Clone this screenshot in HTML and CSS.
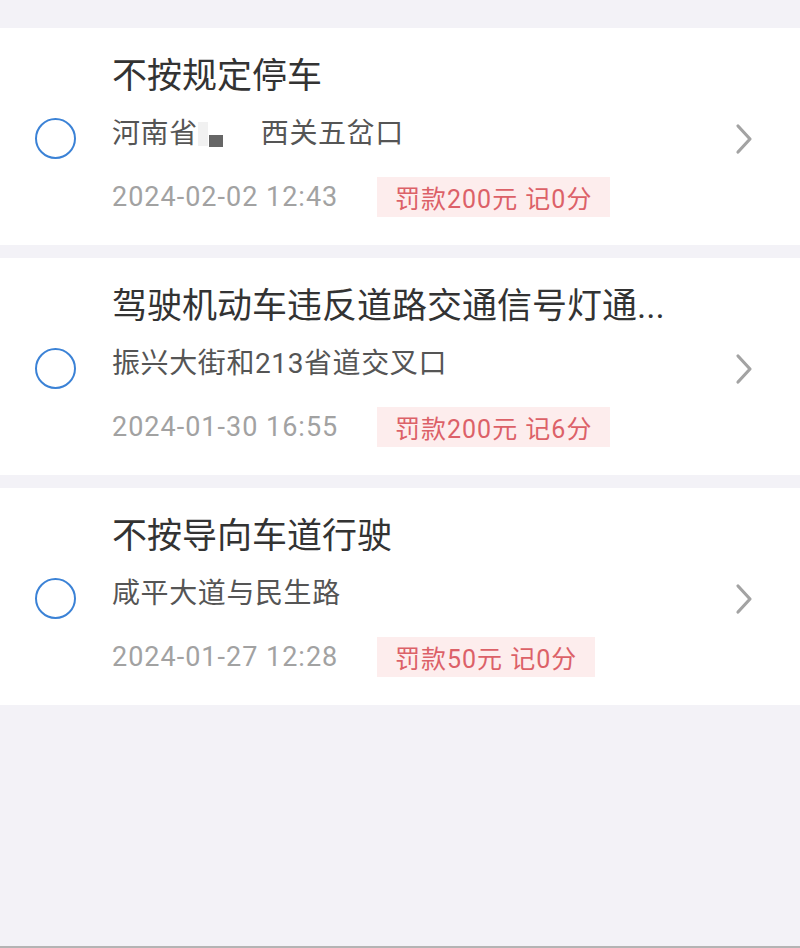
FILE: index.html
```html
<!DOCTYPE html>
<html lang="zh-CN">
<head>
<meta charset="utf-8">
<link rel="stylesheet" href="styles.css">
</head>
<body>
<div class="page">
  <div class="list">
    <div class="card">
      <div class="radio-col"><span class="radio"></span></div>
      <div class="content">
        <div class="title">不按规定停车</div>
        <div class="addr">河南省<span class="blur"></span><span class="mask"></span><span class="gap"></span>西关五岔口</div>
        <div class="meta">
          <span class="date">2024-02-02 12:43</span>
          <span class="badge">罚款200元 记0分</span>
        </div>
      </div>
      <div class="arrow-col">
        <svg class="chev" viewBox="0 0 20 32" width="20" height="32"><path d="M4 3 L16 16 L4 29" fill="none" stroke="#a3a3a3" stroke-width="3.2" stroke-linecap="round" stroke-linejoin="round"/></svg>
      </div>
    </div>
    <div class="card">
      <div class="radio-col"><span class="radio"></span></div>
      <div class="content">
        <div class="title">驾驶机动车违反道路交通信号灯通...</div>
        <div class="addr">振兴大街和213省道交叉口</div>
        <div class="meta">
          <span class="date">2024-01-30 16:55</span>
          <span class="badge">罚款200元 记6分</span>
        </div>
      </div>
      <div class="arrow-col">
        <svg class="chev" viewBox="0 0 20 32" width="20" height="32"><path d="M4 3 L16 16 L4 29" fill="none" stroke="#a3a3a3" stroke-width="3.2" stroke-linecap="round" stroke-linejoin="round"/></svg>
      </div>
    </div>
    <div class="card">
      <div class="radio-col"><span class="radio"></span></div>
      <div class="content">
        <div class="title">不按导向车道行驶</div>
        <div class="addr">咸平大道与民生路</div>
        <div class="meta">
          <span class="date">2024-01-27 12:28</span>
          <span class="badge">罚款50元 记0分</span>
        </div>
      </div>
      <div class="arrow-col">
        <svg class="chev" viewBox="0 0 20 32" width="20" height="32"><path d="M4 3 L16 16 L4 29" fill="none" stroke="#a3a3a3" stroke-width="3.2" stroke-linecap="round" stroke-linejoin="round"/></svg>
      </div>
    </div>
  </div>
</div>
</body>
</html>
```

FILE: styles.css
```css
* { box-sizing: border-box; }
html, body {
  margin: 0;
  padding: 0;
  background: #f3f2f7;
}
body {
  font-family: Roboto, "Noto Sans CJK SC", sans-serif;
}
.page {
  height: 948px;
  background: #f3f2f7;
  padding-top: 28px;
  border-bottom: 2px solid #b4b4b4;
}
.list {
  display: flex;
  flex-direction: column;
  gap: 13px;
}
.card {
  background: #fff;
  height: 217px;
  display: flex;
  align-items: center;
}
.radio-col {
  width: 112px;
  flex: none;
  display: flex;
  justify-content: flex-start;
  padding-left: 35px;
  padding-top: 4px;
}
.radio {
  width: 41px;
  height: 41px;
  border-radius: 50%;
  border: 2.5px solid #3b82d6;
}
.content {
  flex: 1;
  min-width: 0;
  align-self: stretch;
  padding-top: 27px;
  display: flex;
  flex-direction: column;
}
.title {
  font-size: 35px;
  line-height: 44px;
  color: #333;
  white-space: nowrap;
}
.addr {
  margin-top: 17px;
  font-size: 28px;
  letter-spacing: 0.6px;
  line-height: 36px;
  color: #555;
  display: flex;
  align-items: center;
}
.blur {
  width: 10px;
  height: 24px;
  background: #f1f1f1;
}
.mask {
  width: 14px;
  height: 12px;
  background: #666;
  margin-left: 1px;
  margin-top: 14px;
}
.gap {
  width: 38px;
}
.meta {
  margin-top: 25px;
  display: flex;
  align-items: center;
  height: 40px;
}
.date {
  font-size: 27px;
  letter-spacing: 1px;
  color: #a2a2a2;
  width: 265px;
  flex: none;
  white-space: nowrap;
}
.badge {
  height: 40px;
  display: inline-flex;
  align-items: center;
  padding: 0 18px;
  background: #fdeded;
  color: #dc6168;
  font-size: 25px;
  letter-spacing: 1px;
  white-space: nowrap;
}
.arrow-col {
  width: 80px;
  flex: none;
  display: flex;
  align-items: center;
  padding-left: 14px;
  padding-top: 4px;
}
```
